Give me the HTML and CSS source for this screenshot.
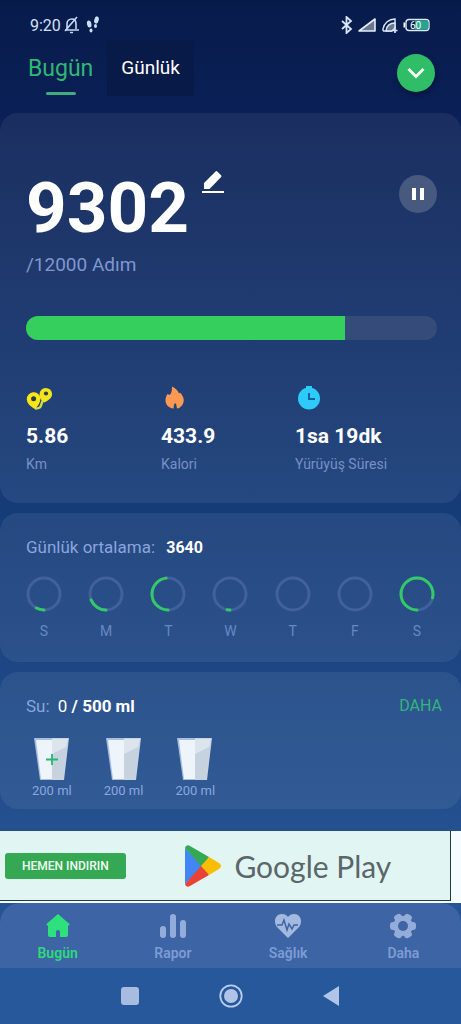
FILE: index.html
```html
<!DOCTYPE html>
<html lang="tr">
<head>
<meta charset="utf-8">
<meta name="viewport" content="width=device-width, initial-scale=1">
<title>Adım Sayar</title>
<link rel="stylesheet" href="styles.css">
</head>
<body>
<div class="statusbar">
  <span class="time">9:20</span>
  <svg class="mute" width="16" height="18" viewBox="0 0 16 18" fill="none" stroke="#c9d8f5" stroke-width="1.600"><path d="M3 13V8c0-3 2-5 5-5s4 2 4 5v5M1 14h14M1 15 13 1M6 16.500h3"/></svg>
  <svg width="14" height="18" viewBox="0 0 14 18" fill="#c9e2f5"><ellipse cx="3.200" cy="8" rx="2.200" ry="3.600" transform="rotate(-12 3.200 8)"/><ellipse cx="5" cy="14.500" rx="1.500" ry="1.900"/><ellipse cx="10.500" cy="4" rx="2.200" ry="3.700" transform="rotate(14 10.500 4)"/><ellipse cx="9.500" cy="10" rx="1.500" ry="1.900"/></svg>
  <div class="signals">
    <svg width="12" height="18" viewBox="0 0 12 18" fill="none" stroke="#d8e6fa" stroke-width="1.800"><path d="m1 5 9 8-4.500 4V1L10 5l-9 8"/></svg>
    <svg width="20" height="18" viewBox="0 0 20 18"><path d="M2 15 18 3v12Z" fill="#6b7791" stroke="#e4edfb" stroke-width="1.600" stroke-linejoin="round"/></svg>
    <svg width="18" height="18" viewBox="0 0 18 18" fill="none" stroke="#dce8fa" stroke-width="1.400"><path d="M2 15V13C3 7 8 3 14 3v9M2 15h9"/><path d="M5 15c0-5 4-8 9-8v5l-3 3Z" fill="#6b7791"/><path d="M14 11v6M11.500 14.500h5" stroke-width="1.600"/></svg>
    <svg width="27" height="14" viewBox="0 0 27 14"><rect x="3" y="1.500" width="23" height="11" rx="3" fill="#081b4a" stroke="#dce8fa" stroke-width="1.400"/><path d="M12 2.200h11.500q1.800 0 1.800 1.800v6q0 1.800-1.800 1.800H12z" fill="#27a58f"/><path d="M1.300 4.500v5" stroke="#fff" stroke-width="1.600"/><text x="7" y="10.500" class="charge">60</text></svg>
  </div>
</div>
<header class="header">
  <nav class="tabs">
    <a class="tab tab-active" href="#bugun">Bugün</a>
    <a class="tab tab-daily" href="#gunluk">Günlük</a>
  </nav>
  <button class="round expand" aria-label="Aç"><svg width="20" height="14" viewBox="0 0 20 14" fill="none" stroke="#f2fff5" stroke-width="3"><path d="m2.500 3 7.500 7.500L17.500 3"/></svg></button>
</header>
<main class="main">
  <section class="card steps">
    <div class="steps-top">
      <h1 class="count">9302</h1>
      <button class="edit" aria-label="Düzenle"><svg width="24" height="24" viewBox="0 0 24 24" fill="#fff"><path d="M3 19v-6L14.500 1.500q.9-.9 1.800 0l3.800 3.800q.9.900 0 1.800L8.500 19z"/><path d="M1 21h22v2H1z"/></svg></button>
      <button class="round pause" aria-label="Duraklat"><svg width="14" height="14" viewBox="0 0 14 14" fill="#fff"><path d="M1 1h4v12H1zM9 1h4v12H9z"/></svg></button>
    </div>
    <p class="goal">/12000 Adım</p>
    <div class="bar" role="progressbar" aria-label="Adım" aria-valuemin="0" aria-valuemax="12000" aria-valuenow="9302"><div class="bar-fill" style="width:77.5%"></div></div>
    <div class="stats">
      <div class="stat">
        <svg width="28" height="26" viewBox="0 0 28 26"><path d="M9 23.500c8 0 5-4 8-8" fill="none" stroke="#cfdf3c" stroke-width="2.400"/><path d="M9 24C4 21 .8 18.500.8 14a6.900 6.900 0 0 1 13.600-1.500C14.800 17 12 21 9 24Z" fill="#ffe41a"/><path d="M18 17.500c-3-2-4.500-5-4.500-8a6.300 6.300 0 0 1 12.600-.5c0 3.500-3 6.500-8.100 8.500Z" fill="#f5e31f"/><circle cx="7.600" cy="13.700" r="2.500" fill="#293e45"/><circle cx="20" cy="8.500" r="2.100" fill="#293e45"/></svg>
        <strong class="value">5.86</strong><span class="caption">Km</span>
      </div>
      <div class="stat">
        <svg width="28" height="26" viewBox="0 0 28 26"><path d="M11 1.500c4 2 6 4 7 7l1-1c4 4 5 9 2 13q-2 2.500-5 3l-1-5h-1.500q-1 2-.8 5C7 23 4 19 4.500 14q.5-3 2-5l2 1q2.500-1 2.500-8.500Z" fill="#ff9953"/></svg>
        <strong class="value">433.9</strong><span class="caption">Kalori</span>
      </div>
      <div class="stat">
        <svg width="28" height="26" viewBox="0 0 28 26"><path d="M11 1h6v4h-6z" fill="#2dcbfa"/><circle cx="14" cy="13.500" r="11" fill="#2dcbfa"/><path d="M14 8v6h6" fill="none" stroke="#1c5e9c" stroke-width="2"/></svg>
        <strong class="value">1sa 19dk</strong><span class="caption">Yürüyüş Süresi</span>
      </div>
    </div>
  </section>
  <section class="card average">
    <p class="line">Günlük ortalama: <strong class="avg">3640</strong></p>
    <div class="week">
      <div class="day"><svg class="ring" viewBox="0 0 36 36"><circle class="track" cx="18" cy="18" r="16"/><circle class="arc" cx="18" cy="18" r="16" pathLength="100" stroke-dasharray="8 100"/></svg>S</div>
      <div class="day"><svg class="ring" viewBox="0 0 36 36"><circle class="track" cx="18" cy="18" r="16"/><circle class="arc" cx="18" cy="18" r="16" pathLength="100" stroke-dasharray="19 100"/></svg>M</div>
      <div class="day"><svg class="ring" viewBox="0 0 36 36"><circle class="track" cx="18" cy="18" r="16"/><circle class="arc" cx="18" cy="18" r="16" pathLength="100" stroke-dasharray="48 100"/></svg>T</div>
      <div class="day"><svg class="ring" viewBox="0 0 36 36"><circle class="track" cx="18" cy="18" r="16"/><circle class="arc" cx="18" cy="18" r="16" pathLength="100" stroke-dasharray="3 100"/></svg>W</div>
      <div class="day"><svg class="ring" viewBox="0 0 36 36"><circle class="track" cx="18" cy="18" r="16"/></svg>T</div>
      <div class="day"><svg class="ring" viewBox="0 0 36 36"><circle class="track" cx="18" cy="18" r="16"/></svg>F</div>
      <div class="day"><svg class="ring" viewBox="0 0 36 36"><circle class="track" cx="18" cy="18" r="16"/><circle class="arc" cx="18" cy="18" r="16" pathLength="100" stroke-dasharray="79 100"/></svg>S</div>
    </div>
  </section>
  <section class="card water">
    <div class="water-top">
      <p class="line">Su: <span class="amount">0 <strong>/ 500 ml</strong></span></p>
      <a class="more" href="#su">DAHA</a>
    </div>
    <div class="cups">
      <button class="cup"><svg width="38" height="44" viewBox="0 0 38 44"><path d="M1 1h18v42H7z" fill="#a9bde0"/><path d="M3 3h16v39H8z" fill="#edf4fa"/><path d="M19 1h17l-5 42H19z" fill="#c6d3de"/><path d="M19 2h16l-2 8-14 7z" fill="#dce4ee"/><path d="M19 17v11M13 22.500h12" stroke="#25b870" stroke-width="1.800"/></svg>200 ml</button>
      <button class="cup"><svg width="38" height="44" viewBox="0 0 38 44"><path d="M1 1h18v42H7z" fill="#a9bde0"/><path d="M3 3h16v39H8z" fill="#edf4fa"/><path d="M19 1h17l-5 42H19z" fill="#c6d3de"/><path d="M19 2h16l-2 8-14 7z" fill="#dce4ee"/></svg>200 ml</button>
      <button class="cup"><svg width="38" height="44" viewBox="0 0 38 44"><path d="M1 1h18v42H7z" fill="#a9bde0"/><path d="M3 3h16v39H8z" fill="#edf4fa"/><path d="M19 1h17l-5 42H19z" fill="#c6d3de"/><path d="M19 2h16l-2 8-14 7z" fill="#dce4ee"/></svg>200 ml</button>
    </div>
  </section>
</main>
<aside class="ad">
  <div class="ad-inner">
    <button class="install">HEMEN INDIRIN</button>
    <a class="play" href="#play">
      <svg width="37" height="42" viewBox="0 0 37 42"><path d="M1 3v36L19 21z" fill="#4285f4"/><path d="M1 3Q2-1 6 1l19 11-7 10Z" fill="#34a853"/><path d="M1 39q1 4 5 2l19-11-7-10Z" fill="#ea4335"/><path d="m25 12 10 6q4 3 0 6l-10 6-8-9Z" fill="#fbbc04"/></svg>
      <span>Google Play</span>
    </a>
  </div>
</aside>
<nav class="bottom">
  <a class="item item-active" href="#bugun"><svg width="28" height="26" viewBox="0 0 28 26" fill="#2fe17c"><path d="m14 1 11.500 10q.5 1.500-1.500 1.500V22q0 2-2 2h-6v-5q0-2-2-2t-2 2v5H6q-2 0-2-2v-9.500q-2 0-1.500-1.500Z"/></svg>Bugün</a>
  <a class="item" href="#rapor"><svg width="28" height="26" viewBox="0 0 28 26" fill="#93acd9"><rect x="1" y="13" width="6" height="12" rx="3"/><rect x="11" y="1" width="6" height="24" rx="3"/><rect x="21" y="7" width="6" height="18" rx="3"/></svg>Rapor</a>
  <a class="item" href="#saglik"><svg width="28" height="26" viewBox="0 0 28 26"><path d="M14 25 3 14C-1 9 1 1 8 1q4 0 6 3 2-3 6-3c7 0 9 8 5 13Z" fill="#a3b9df"/><path d="M3 12h5l2-5 3 10 2-6 3 5 2-4h4" fill="none" stroke="#3f64a2" stroke-width="1.500"/></svg>Sağlık</a>
  <a class="item" href="#daha"><svg width="28" height="26" viewBox="0 0 28 26"><g fill="#93acd9"><circle cx="14" cy="13" r="10"/><rect x="10" y="0" width="8" height="26" rx="3" transform="rotate(30 14 13)"/><rect x="10" y="0" width="8" height="26" rx="3" transform="rotate(90 14 13)"/><rect x="10" y="0" width="8" height="26" rx="3" transform="rotate(150 14 13)"/></g><circle cx="14" cy="13" r="5" fill="#3f64a4"/></svg>Daha</a>
</nav>
<div class="system">
  <button class="key" aria-label="Son uygulamalar"><svg width="26" height="26" viewBox="0 0 26 26"><rect x="4" y="4" width="18" height="18" rx="3" fill="#a8bce0"/></svg></button>
  <button class="key" aria-label="Ana ekran"><svg width="26" height="26" viewBox="0 0 26 26"><circle cx="13" cy="13" r="10.700" fill="none" stroke="#b9cdf0" stroke-width="1.800"/><circle cx="13" cy="13" r="7" fill="#b0c4e8"/></svg></button>
  <button class="key" aria-label="Geri"><svg width="26" height="26" viewBox="0 0 26 26"><path d="M4 13 20 3v20z" fill="#b0c4e8"/></svg></button>
</div>
</body>
</html>
```

FILE: styles.css
```css
* { box-sizing: border-box; }

body {
  margin: 0;
  min-height: 100vh;
  display: flex;
  flex-direction: column;
  background: linear-gradient(#071b4b 0%, #0a1f55 10%, #163c78 50%, #24508f 80%, #27599d 100%);
  color: #fff;
  font-family: Roboto, "Noto Sans", sans-serif;
}

h1, p { margin: 0; }
a { color: inherit; text-decoration: none; }
button {
  padding: 0;
  border: 0;
  background: none;
  color: inherit;
  font-family: inherit;
}
svg { display: block; flex: none; }

.statusbar {
  display: flex;
  align-items: center;
  padding: 16px 31px 0 30px;
  height: 34px;
}
.time { font-size: 16px; color: #d5e1fa; }
.mute { margin: 0 6px 0 3px; }
.signals { margin-left: auto; display: flex; align-items: center; gap: 4px; }
.charge { font-size: 10px; fill: #fff; }

.header {
  display: flex;
  justify-content: space-between;
  align-items: flex-start;
  padding: 6px 26px 17px 28px;
}
.tabs { display: flex; align-items: flex-start; gap: 14px; }
.tab { display: flex; flex-direction: column; align-items: center; }
.tab-active { padding-top: 15px; gap: 9px; font-size: 23px; line-height: 28px; color: #2eb872; }
.tab-active::after { content: ""; width: 30px; height: 3px; border-radius: 2px; background: #3dae7c; }
.tab-daily { padding: 14px; font-size: 19px; line-height: 28px; background: #081a48; }
.round { display: grid; place-items: center; border-radius: 50%; width: 38px; height: 38px; }
.expand { margin-top: 14px; background: #2fbd67; box-shadow: 1px 3px 5px #04143d; }

.main { display: grid; gap: 10px; }
.card {
  padding: 0 24px 0 26px;
  border-radius: 18px;
  background: rgba(255, 255, 255, 0.065);
}
.steps { padding-top: 55px; padding-bottom: 30px; }
.steps-top { display: flex; align-items: flex-start; }
.count { font-size: 71px; line-height: 80px; font-weight: 700; }
.edit { margin: 2px 0 0 12px; }
.pause { margin: 7px 0 0 auto; background: #47597f; }
.goal { margin-top: 4px; font-size: 19px; line-height: 26px; color: #7f97cf; }
.bar { margin-top: 38px; height: 24px; border-radius: 12px; overflow: hidden; background: #354b7a; }
.bar-fill { height: 100%; background: #34cf5c; }
.stats { margin-top: 45px; display: grid; grid-template-columns: 135px 134px 1fr; }
.stat { display: flex; flex-direction: column; }
.value { margin-top: 12px; font-size: 21px; line-height: 26px; }
.caption { margin-top: 6px; font-size: 14px; line-height: 18px; color: #7890c8; }

.line { font-size: 17px; line-height: 22px; color: #8aa5dd; }
.average { padding-top: 23px; padding-bottom: 22px; }
.avg { margin-left: 7px; font-size: 16px; color: #fff; }
.week { margin-top: 17px; padding-right: 2px; display: flex; justify-content: space-between; }
.day { display: flex; flex-direction: column; align-items: center; gap: 10px; font-size: 14px; line-height: 18px; color: #6888c2; }
.ring { width: 36px; height: 36px; transform: rotate(90deg); fill: none; }
.track { stroke: #42619b; stroke-width: 3; }
.arc { stroke: #32c967; stroke-width: 3; stroke-linecap: round; }

.water { padding-top: 23px; padding-bottom: 10px; }
.water-top { display: flex; justify-content: space-between; margin-right: -5px; }
.amount { margin-left: 4px; color: #fff; }
.more { font-size: 16px; line-height: 22px; color: #32b57d; }
.cups { margin-top: 20px; padding-left: 6px; display: flex; gap: 32px; }
.cup { display: flex; flex-direction: column; align-items: center; gap: 2px; font-size: 13px; line-height: 16px; color: #8ba7df; }

.ad { margin-top: 22px; padding: 0 10px 2px 0; background: #f5fcff; }
.ad-inner {
  display: flex;
  align-items: center;
  height: 70px;
  padding-left: 5px;
  border: 1px solid #223c3b;
  border-width: 0 1px 1px 0;
  background: #e1f6f3;
}
.install { padding: 0 17px; height: 26px; border-radius: 3px; background: #34a853; color: #f2fff5; font-size: 12px; font-weight: 500; }
.play { display: flex; align-items: center; gap: 13px; margin: 0 auto; color: #5b6669; font-family: Lato, sans-serif; font-size: 30px; }

.bottom {
  display: grid;
  grid-template-columns: repeat(4, 1fr);
  padding: 10px 0 6px;
  border-radius: 20px 20px 0 0;
  background: #3d64a5;
}
.item { display: flex; flex-direction: column; align-items: center; gap: 5px; font-size: 14px; line-height: 18px; font-weight: 600; color: #7c9cd4; }
.item-active { color: #2edb7a; }

.system { flex: 1; display: flex; align-items: center; justify-content: center; gap: 75px; min-height: 56px; background: #27589c; }
.key { width: 26px; height: 26px; }
```
